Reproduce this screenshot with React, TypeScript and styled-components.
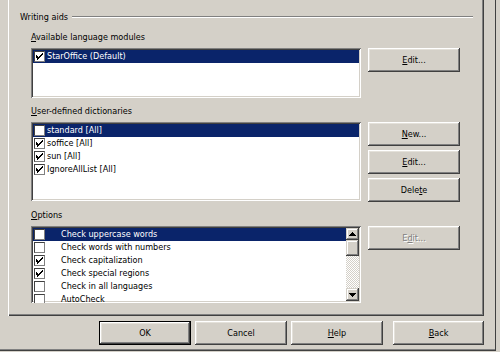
import React from "react";
import styled, { createGlobalStyle, css } from "styled-components";

const FACE = "#d4d0c8";
const SHADOW = "#808080";
const DARK = "#404040";
const LIGHT = "#ffffff";
const SELECT = "#0a246a";

const GlobalStyle = createGlobalStyle`
  html, body { margin: 0; padding: 0; background: ${FACE}; }
  body {
    font-family: "DejaVu Sans Condensed", "DejaVu Sans", sans-serif;
    font-size: 9px;
    color: #000;
  }
  #root { width: 500px; height: 352px; }
`;

const Screen = styled.div`
  width: 500px;
  height: 352px;
  background: ${FACE};
  overflow: hidden;
`;

const Window = styled.div`
  width: 496px;
  height: 351px;
  box-sizing: border-box;
  border-right: 1px solid ${DARK};
  border-bottom: 1px solid ${DARK};
  box-shadow: inset 0 -1px ${SHADOW};
  display: flex;
  flex-direction: column;
`;

const TabPage = styled.div`
  margin-left: 8px;
  width: 476px;
  height: 316px;
  box-sizing: border-box;
  box-shadow: inset 1px 0 ${LIGHT}, inset -1px -1px ${DARK}, inset -2px -2px ${SHADOW};
  padding: 11px 0 0 12px;
  display: flex;
  flex-direction: column;
`;

const GroupHeader = styled.div`
  display: flex;
  align-items: center;
  height: 12px;
  padding-right: 11px;
`;

const GroupLine = styled.div`
  flex: 1;
  margin-left: 4px;
  height: 0;
  border-top: 1px solid ${SHADOW};
  border-bottom: 1px solid ${LIGHT};
`;

const Sections = styled.div`
  display: flex;
  flex-direction: column;
  gap: 6px;
  margin-top: 7px;
  padding-left: 11px;
`;

const Section = styled.div`
  display: flex;
  flex-direction: column;
  gap: 4px;
`;

const Label = styled.div`
  line-height: 14px;
  height: 14px;
  white-space: nowrap;
`;

const SectionBody = styled.div`
  display: grid;
  grid-template-columns: 330px 92px;
  column-gap: 7px;
  align-items: start;
`;

const ListBox = styled.div<{ $h: number }>`
  height: ${(p) => p.$h}px;
  box-sizing: border-box;
  background: #fff;
  padding: 2px;
  box-shadow: inset 1px 1px ${SHADOW}, inset -1px -1px ${LIGHT},
    inset 2px 2px ${DARK}, inset -2px -2px ${FACE};
  display: flex;
  overflow: hidden;
`;

const Rows = styled.div`
  flex: 1;
  display: flex;
  flex-direction: column;
  min-width: 0;
`;

const Row = styled.div<{ $selected?: boolean }>`
  height: 13px;
  flex: none;
  display: flex;
  align-items: center;
  padding-left: 1px;
  white-space: nowrap;
  ${(p) =>
    p.$selected &&
    css`
      background: ${SELECT};
      color: #fff;
    `}
`;

const RowText = styled.span<{ $indent: number }>`
  margin-left: ${(p) => p.$indent}px;
  line-height: 13px;
`;

const Box = styled.span`
  width: 11px;
  height: 11px;
  box-sizing: border-box;
  flex: none;
  background: #fff;
  border-top: 1px solid ${DARK};
  border-left: 1px solid ${DARK};
  border-right: 1px solid ${SHADOW};
  border-bottom: 1px solid ${SHADOW};
  display: flex;
  align-items: center;
  justify-content: center;
`;

const CheckBox = ({ checked }: { checked: boolean }) => (
  <Box>
    {checked && (
      <svg width="9" height="9" viewBox="0 0 9 9" shapeRendering="crispEdges">
        <path
          d="M7 1h1v1h-1zM6 2h2v1h-2zM1 3h1v1h-1zM5 3h2v1h-2zM1 4h2v1h-2zM4 4h2v1h-2zM1 5h4v1h-4zM2 6h2v1h-2zM2 7h1v1h-1z"
          fill="#000"
        />
      </svg>
    )}
  </Box>
);

const raised = css`
  background: ${FACE};
  box-shadow: inset -1px -1px ${DARK}, inset 1px 1px ${LIGHT},
    inset -2px -2px ${SHADOW}, inset 2px 2px #e4e1da;
`;

const ButtonColumn = styled.div`
  display: flex;
  flex-direction: column;
  gap: 4px;
`;

const Button = styled.button<{ $default?: boolean; $disabled?: boolean; $w?: number }>`
  width: ${(p) => p.$w ?? 92}px;
  height: 24px;
  padding: 0;
  margin: 0;
  border: none;
  font: inherit;
  color: #000;
  ${raised};
  display: flex;
  align-items: center;
  justify-content: center;
  ${(p) =>
    p.$default &&
    css`
      box-shadow: inset 0 0 0 1px #000, inset -2px -2px ${DARK}, inset 2px 2px ${LIGHT},
        inset -3px -3px ${SHADOW}, inset 3px 3px #e4e1da;
    `}
  ${(p) =>
    p.$disabled &&
    css`
      color: ${SHADOW};
      text-shadow: 1px 1px 0 ${LIGHT};
    `}
`;

const ScrollBar = styled.div`
  width: 13px;
  flex: none;
  display: flex;
  flex-direction: column;
  background-color: #ece9e3;
  background-image: repeating-conic-gradient(#ffffff 0 25%, ${FACE} 0 50%);
  background-size: 2px 2px;
`;

const ScrollButton = styled.div<{ $h: number }>`
  height: ${(p) => p.$h}px;
  flex: none;
  background: ${FACE};
  box-shadow: inset -1px -1px ${DARK}, inset 1px 1px ${FACE},
    inset -2px -2px ${SHADOW}, inset 2px 2px ${LIGHT};
  display: flex;
  align-items: center;
  justify-content: center;
`;

const Track = styled.div`
  flex: 1;
`;

const Arrow = ({ up }: { up?: boolean }) => (
  <svg width="7" height="4" viewBox="0 0 7 4" shapeRendering="crispEdges">
    <path
      d={
        up
          ? "M3 0h1v1h1v1h1v1h1v1h-7v-1h1v-1h1v-1h1z"
          : "M0 0h7v1h-1v1h-1v1h-1v1h-1v-1h-1v-1h-1v-1h-1z"
      }
      fill="#000"
    />
  </svg>
);

const ButtonBar = styled.div`
  display: flex;
  justify-content: flex-end;
  margin-top: 5px;
  padding-right: 11px;
  gap: 4px;
`;

const Spacer = styled.div<{ $w: number }>`
  width: ${(p) => p.$w}px;
`;

type Item = { label: string; checked: boolean; selected?: boolean };

const dictionaries: Item[] = [
  { label: "standard [All]", checked: false, selected: true },
  { label: "soffice [All]", checked: true },
  { label: "sun [All]", checked: true },
  { label: "IgnoreAllList [All]", checked: true },
];

const options: Item[] = [
  { label: "Check uppercase words", checked: false, selected: true },
  { label: "Check words with numbers", checked: false },
  { label: "Check capitalization", checked: true },
  { label: "Check special regions", checked: true },
  { label: "Check in all languages", checked: false },
  { label: "AutoCheck", checked: false },
];

export default function App() {
  return (
    <Screen>
      <GlobalStyle />
      <Window>
        <TabPage>
          <GroupHeader>
            <span>Writing aids</span>
            <GroupLine />
          </GroupHeader>
          <Sections>
            <Section>
              <Label>
                <u>A</u>vailable language modules
              </Label>
              <SectionBody>
                <ListBox $h={50}>
                  <Rows>
                    <Row $selected>
                      <CheckBox checked />
                      <RowText $indent={2}>StarOffice (Default)</RowText>
                    </Row>
                  </Rows>
                </ListBox>
                <ButtonColumn>
                  <Button>
                    <span>
                      <u>E</u>dit...
                    </span>
                  </Button>
                </ButtonColumn>
              </SectionBody>
            </Section>
            <Section>
              <Label>
                <u>U</u>ser-defined dictionaries
              </Label>
              <SectionBody>
                <ListBox $h={79}>
                  <Rows>
                    {dictionaries.map((d) => (
                      <Row key={d.label} $selected={d.selected}>
                        <CheckBox checked={d.checked} />
                        <RowText $indent={2}>{d.label}</RowText>
                      </Row>
                    ))}
                  </Rows>
                </ListBox>
                <ButtonColumn>
                  <Button>
                    <span>
                      <u>N</u>ew...
                    </span>
                  </Button>
                  <Button>
                    <span>
                      <u>E</u>dit...
                    </span>
                  </Button>
                  <Button>
                    <span>
                      Dele<u>t</u>e
                    </span>
                  </Button>
                </ButtonColumn>
              </SectionBody>
            </Section>
            <Section>
              <Label>
                <u>O</u>ptions
              </Label>
              <SectionBody>
                <ListBox $h={77}>
                  <Rows>
                    {options.map((o) => (
                      <Row key={o.label} $selected={o.selected}>
                        <CheckBox checked={o.checked} />
                        <RowText $indent={16}>{o.label}</RowText>
                      </Row>
                    ))}
                  </Rows>
                  <ScrollBar>
                    <ScrollButton $h={12}>
                      <Arrow up />
                    </ScrollButton>
                    <ScrollButton $h={16} />
                    <Track />
                    <ScrollButton $h={13}>
                      <Arrow />
                    </ScrollButton>
                  </ScrollBar>
                </ListBox>
                <ButtonColumn>
                  <Button $disabled>
                    <span>
                      E<u>d</u>it...
                    </span>
                  </Button>
                </ButtonColumn>
              </SectionBody>
            </Section>
          </Sections>
        </TabPage>
        <ButtonBar>
          <Button $default>OK</Button>
          <Button>Cancel</Button>
          <Button>
            <span>
              <u>H</u>elp
            </span>
          </Button>
          <Spacer $w={2} />
          <Button $w={91}>
            <span>
              <u>B</u>ack
            </span>
          </Button>
        </ButtonBar>
      </Window>
    </Screen>
  );
}
